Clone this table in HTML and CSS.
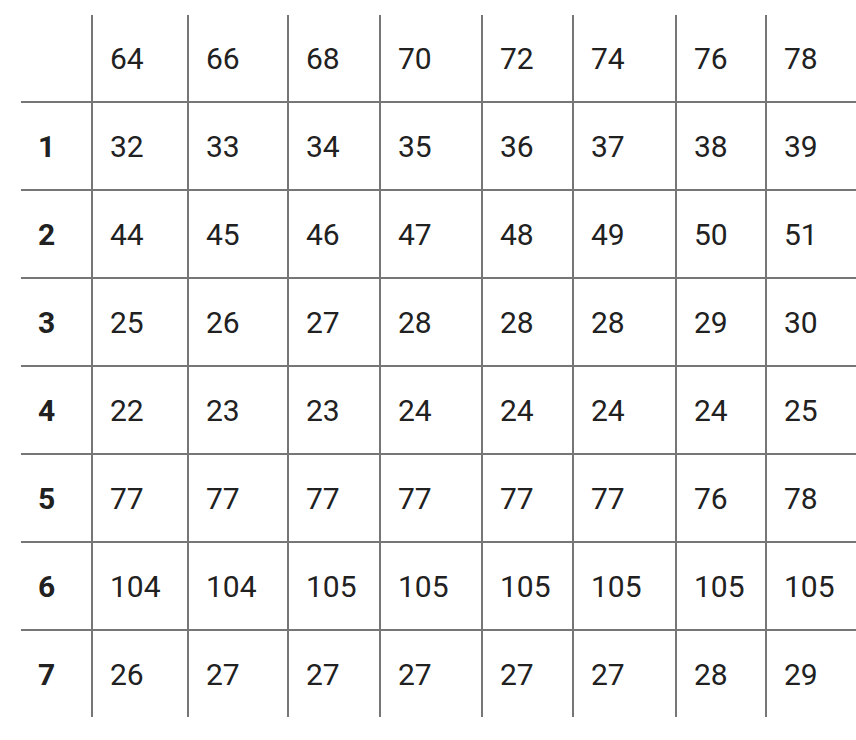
FILE: index.html
```html
<!DOCTYPE html>
<html lang="en">
<head>
<meta charset="utf-8">
<title>Table</title>
<link rel="stylesheet" href="styles.css">
</head>
<body>
<div class="wrap">
<table class="grid">
  <colgroup>
    <col class="c1"><col class="c2"><col class="c3"><col class="c4"><col class="c5"><col class="c6"><col class="c7"><col class="c8"><col class="c9">
  </colgroup>
  <thead>
    <tr><th></th><th>64</th><th>66</th><th>68</th><th>70</th><th>72</th><th>74</th><th>76</th><th>78</th></tr>
  </thead>
  <tbody>
    <tr><th>1</th><td>32</td><td>33</td><td>34</td><td>35</td><td>36</td><td>37</td><td>38</td><td>39</td></tr>
    <tr><th>2</th><td>44</td><td>45</td><td>46</td><td>47</td><td>48</td><td>49</td><td>50</td><td>51</td></tr>
    <tr><th>3</th><td>25</td><td>26</td><td>27</td><td>28</td><td>28</td><td>28</td><td>29</td><td>30</td></tr>
    <tr><th>4</th><td>22</td><td>23</td><td>23</td><td>24</td><td>24</td><td>24</td><td>24</td><td>25</td></tr>
    <tr><th>5</th><td>77</td><td>77</td><td>77</td><td>77</td><td>77</td><td>77</td><td>76</td><td>78</td></tr>
    <tr><th>6</th><td>104</td><td>104</td><td>105</td><td>105</td><td>105</td><td>105</td><td>105</td><td>105</td></tr>
    <tr><th>7</th><td>26</td><td>27</td><td>27</td><td>27</td><td>27</td><td>27</td><td>28</td><td>29</td></tr>
  </tbody>
</table>
</div>
</body>
</html>
```

FILE: styles.css
```css
html, body {
  margin: 0;
  padding: 0;
  background: #ffffff;
  overflow: hidden;
}
.wrap {
  padding: 15px 0 0 21px;
}
.grid {
  border-collapse: separate;
  border-spacing: 0;
  table-layout: fixed;
  width: 835px;
  font-family: Roboto, "Liberation Sans", sans-serif;
  font-size: 30px;
  color: #212121;
}
.c1 { width: 70px; }
.c2 { width: 96px; }
.c3 { width: 100px; }
.c4 { width: 92px; }
.c5 { width: 102px; }
.c6 { width: 91px; }
.c7 { width: 103px; }
.c8 { width: 90px; }
.c9 { width: 91px; }
.grid th,
.grid td {
  box-sizing: border-box;
  padding: 0 0 0 17px;
  text-align: left;
  vertical-align: middle;
  white-space: nowrap;
  border-left: 2px solid #767676;
  border-top: 2px solid #767676;
  height: 88px;
  font-weight: 400;
}
.grid tbody th {
  font-weight: 700;
}
.grid tr > :first-child {
  border-left: none;
}
.grid thead th {
  border-top: none;
  height: 86px;
}
```
